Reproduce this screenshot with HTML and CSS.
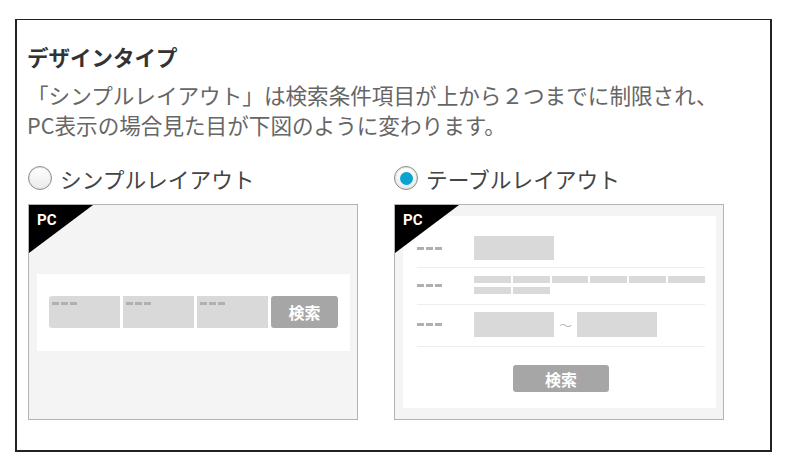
FILE: index.html
```html
<!DOCTYPE html>
<html>
<head>
<meta charset="utf-8">
<title>デザインタイプ</title>
<link rel="stylesheet" href="styles.css">
</head>
<body>

<!-- design type setting -->
<div class="panel">
    <h3 class="title">デザインタイプ</h3>
    <p class="note">「シンプルレイアウト」は検索条件項目が上から２つまでに制限され、<br>PC表示の場合見た目が下図のように変わります。</p>

    <div class="options">

        <!-- simple layout -->
        <div class="option">
            <div class="radio-row"><span class="radio"></span>シンプルレイアウト</div>
            <div class="preview simple">
                <span class="corner">PC</span>
                <div class="band">
                    <div class="field first"><span class="dash"></span></div>
                    <div class="field"><span class="dash"></span></div>
                    <div class="field"><span class="dash"></span></div>
                    <div class="search-btn">検索</div>
                </div>
            </div>
        </div>

        <!-- table layout -->
        <div class="option">
            <div class="radio-row"><span class="radio checked"></span>テーブルレイアウト</div>
            <div class="preview table">
                <span class="corner">PC</span>
                <div class="sheet">
                    <div class="row row-1">
                        <span class="dash"></span>
                        <div class="box"></div>
                    </div>
                    <div class="row row-2">
                        <span class="dash"></span>
                        <div class="chips">
                            <div class="chip"></div><div class="chip"></div><div class="chip"></div>
                            <div class="chip"></div><div class="chip"></div><div class="chip"></div>
                            <div class="chip"></div><div class="chip"></div>
                        </div>
                    </div>
                    <div class="row row-3">
                        <span class="dash"></span>
                        <div class="box"></div>
                        <span class="tilde">～</span>
                        <div class="box"></div>
                    </div>
                    <div class="sheet-btn">検索</div>
                </div>
            </div>
        </div>

    </div>
</div>

</body>
</html>
```

FILE: styles.css
```css
body {
    margin: 0;
    background-color: #ffffff;
    font-family: "Noto Sans CJK JP", "Noto Sans", sans-serif;
}

.panel {
    box-sizing: border-box;
    width: 757px;
    margin: 19px 0 0 15px;
    padding: 22px 10px 30px 10px;
    border: 1px solid #222222;
    border-left-width: 2px;
    border-right-width: 2px;
    border-bottom-width: 2px;
    box-shadow: 0 1px 0 #dddddd;
}

.title {
    margin: 0;
    font-size: 21.5px;
    line-height: 30px;
    font-weight: bold;
    color: #333333;
}

.note {
    margin: 8px 0 0 0;
    font-size: 21.6px;
    line-height: 30px;
    color: #666666;
}

.options {
    display: flex;
    gap: 36px;
    margin-top: 25px;
    padding-left: 1px;
}

.option {
    display: flex;
    flex-direction: column;
}

.radio-row {
    display: flex;
    align-items: center;
    height: 30px;
    margin-top: -2px;
    margin-bottom: 11px;
    font-size: 21.7px;
    color: #444444;
}

.radio {
    box-sizing: border-box;
    width: 24px;
    height: 24px;
    margin: 0 8px 0 0;
    border: 1px solid #8c8c8c;
    border-radius: 50%;
    background: linear-gradient(#ffffff, #ebebeb);
    box-shadow: inset 0 0 0 1px #e6e6e6;
    display: flex;
    align-items: center;
    justify-content: center;
}

.radio.checked::after {
    content: "";
    width: 13px;
    height: 13px;
    border-radius: 50%;
    background-color: #0aa3cf;
}

/* preview pictures */

.preview {
    position: relative;
    box-sizing: border-box;
    width: 330px;
    height: 216px;
    border: 1px solid #b3b3b3;
    background-color: #f4f4f4;
}

.corner {
    position: absolute;
    top: 0;
    left: 0;
    width: 64px;
    height: 48px;
    background-color: #000000;
    clip-path: polygon(0 0, 100% 0, 0 100%);
    color: #ffffff;
    font-family: "Roboto", "Liberation Sans", sans-serif;
    font-weight: bold;
    font-size: 15px;
    line-height: 16px;
    padding: 7px 0 0 8px;
    box-sizing: border-box;
}

.dash {
    display: block;
    width: 25px;
    height: 3px;
    background: repeating-linear-gradient(90deg, #b0b0b0 0 7px, transparent 7px 9px);
}

.preview.simple {
    padding: 69px 7px 0 8px;
}

.band {
    display: flex;
    gap: 3px;
    padding: 22px 12px 23px 12px;
    background-color: #ffffff;
}

.field {
    width: 71px;
    height: 32px;
    padding: 6px 0 0 3px;
    box-sizing: border-box;
    background-color: #d9d9d9;
}

.field.first {
    border-radius: 3px 0 0 3px;
}

.search-btn {
    width: 67px;
    height: 32px;
    border-radius: 3px;
    background-color: #a6a6a6;
    color: #ffffff;
    font-weight: bold;
    font-size: 16px;
    display: flex;
    align-items: center;
    justify-content: center;
}

.preview.table {
    padding: 11px 7px 11px 8px;
}

.sheet {
    height: 100%;
    padding: 0 11px 0 14px;
    background-color: #ffffff;
    box-sizing: border-box;
}

.row {
    display: flex;
    align-items: center;
    border-bottom: 1px solid #eeeeee;
}

.row .dash {
    width: 57px;
    background: repeating-linear-gradient(90deg, #b0b0b0 0 7px, transparent 7px 9px) no-repeat;
    background-size: 25px 3px;
    flex-shrink: 0;
}

.row-1 {
    padding: 20px 0 7px 0;
}

.row-2 {
    padding: 8px 0 10px 0;
}

.row-3 {
    padding: 7px 0 9px 0;
}

.box {
    width: 80px;
    height: 24px;
    background-color: #d9d9d9;
}

.row-3 .box {
    height: 25px;
}

.chips {
    flex: 1;
    display: grid;
    grid-template-columns: repeat(6, 1fr);
    gap: 4px 2px;
}

.chip {
    height: 7px;
    background-color: #d9d9d9;
}

.tilde {
    width: 23px;
    text-align: center;
    color: #bbbbbb;
    font-size: 13px;
}

.sheet-btn {
    width: 96px;
    height: 27px;
    margin: 18px auto 0 auto;
    border-radius: 3px;
    background-color: #a6a6a6;
    color: #ffffff;
    font-weight: bold;
    font-size: 16px;
    display: flex;
    align-items: center;
    justify-content: center;
}
```
